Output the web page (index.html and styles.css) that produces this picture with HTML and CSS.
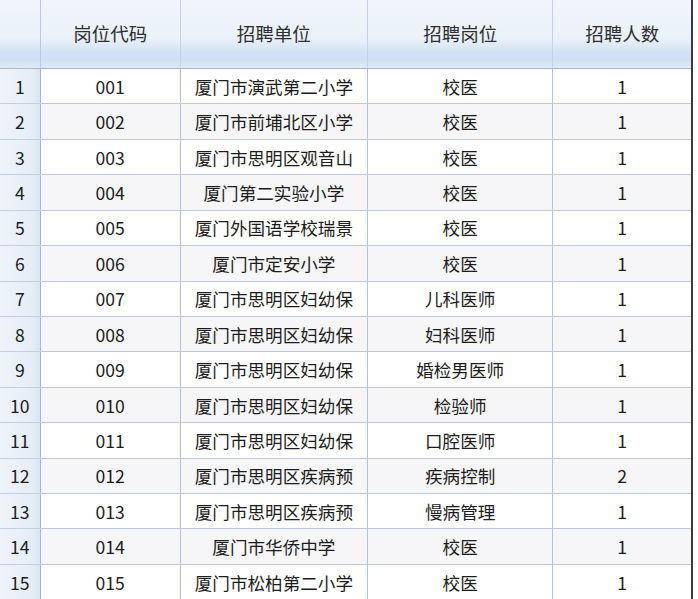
FILE: index.html
```html
<!DOCTYPE html>
<html lang="zh">
<head>
<meta charset="utf-8">
<link rel="stylesheet" href="styles.css">
</head>
<body>
<table class="grid">
  <colgroup>
    <col class="c0"><col class="c1"><col class="c2"><col class="c3"><col class="c4">
  </colgroup>
  <thead>
    <tr><th class="idx"></th><th>岗位代码</th><th>招聘单位</th><th>招聘岗位</th><th>招聘人数</th></tr>
  </thead>
  <tbody>
    <tr><td class="idx">1</td><td>001</td><td>厦门市演武第二小学</td><td>校医</td><td>1</td></tr>
    <tr><td class="idx">2</td><td>002</td><td>厦门市前埔北区小学</td><td>校医</td><td>1</td></tr>
    <tr><td class="idx">3</td><td>003</td><td>厦门市思明区观音山</td><td>校医</td><td>1</td></tr>
    <tr><td class="idx">4</td><td>004</td><td>厦门第二实验小学</td><td>校医</td><td>1</td></tr>
    <tr><td class="idx">5</td><td>005</td><td>厦门外国语学校瑞景</td><td>校医</td><td>1</td></tr>
    <tr><td class="idx">6</td><td>006</td><td>厦门市定安小学</td><td>校医</td><td>1</td></tr>
    <tr><td class="idx">7</td><td>007</td><td>厦门市思明区妇幼保</td><td>儿科医师</td><td>1</td></tr>
    <tr><td class="idx">8</td><td>008</td><td>厦门市思明区妇幼保</td><td>妇科医师</td><td>1</td></tr>
    <tr><td class="idx">9</td><td>009</td><td>厦门市思明区妇幼保</td><td>婚检男医师</td><td>1</td></tr>
    <tr><td class="idx">10</td><td>010</td><td>厦门市思明区妇幼保</td><td>检验师</td><td>1</td></tr>
    <tr><td class="idx">11</td><td>011</td><td>厦门市思明区妇幼保</td><td>口腔医师</td><td>1</td></tr>
    <tr><td class="idx">12</td><td>012</td><td>厦门市思明区疾病预</td><td>疾病控制</td><td>2</td></tr>
    <tr><td class="idx">13</td><td>013</td><td>厦门市思明区疾病预</td><td>慢病管理</td><td>1</td></tr>
    <tr><td class="idx">14</td><td>014</td><td>厦门市华侨中学</td><td>校医</td><td>1</td></tr>
    <tr><td class="idx">15</td><td>015</td><td>厦门市松柏第二小学</td><td>校医</td><td>1</td></tr>
  </tbody>
</table>
</body>
</html>
```
FILE: styles.css
```css
html, body {
  margin: 0;
  padding: 0;
  background: #ffffff;
}
body {
  width: 698px;
  height: 599px;
  overflow: hidden;
  font-family: "Noto Sans CJK SC", "Noto Sans", sans-serif;
  color: #1c1c1c;
}
.grid {
  border-collapse: collapse;
  table-layout: fixed;
  width: 693px;
  border-right: 2px solid #3a3a3a;
}
.c0 { width: 40px; }
.c1 { width: 140px; }
.c2 { width: 187px; }
.c3 { width: 185px; }
.c4 { width: 139px; }
th, td {
  padding: 0;
  text-align: center;
  vertical-align: middle;
  white-space: nowrap;
  overflow: hidden;
  border-left: 1px solid #b3c2dc;
  border-bottom: 1px solid #bdc8dc;
}
th:first-child, td:first-child { border-left: none; }
th {
  height: 66px;
  font-weight: normal;
  font-size: 18.5px;
  color: #2e2e2e;
  padding-bottom: 2px;
  background: linear-gradient(to bottom, #f1f5fb 0%, #eaf1f9 55%, #d4e3f4 76%, #cfdff2 88%, #e0eaf6 100%);
  border-bottom: 1px solid #a9b8d2;
  border-left-color: #c3d2e6;
}
td {
  height: 34.43px;
  font-size: 17.6px;
  background: #ffffff;
}
tbody tr:nth-child(even) td { background: #f6f5f7; }
tbody td.idx, tbody tr:nth-child(even) td.idx {
  background: linear-gradient(to right, #eef3fa 0%, #e6edf7 80%, #dae4f1 100%);
  border-bottom-color: #c2cee2;
  border-right: 1px solid #a4b6d3;
}
th.idx { border-right: 1px solid #b9c9e0; }
```
